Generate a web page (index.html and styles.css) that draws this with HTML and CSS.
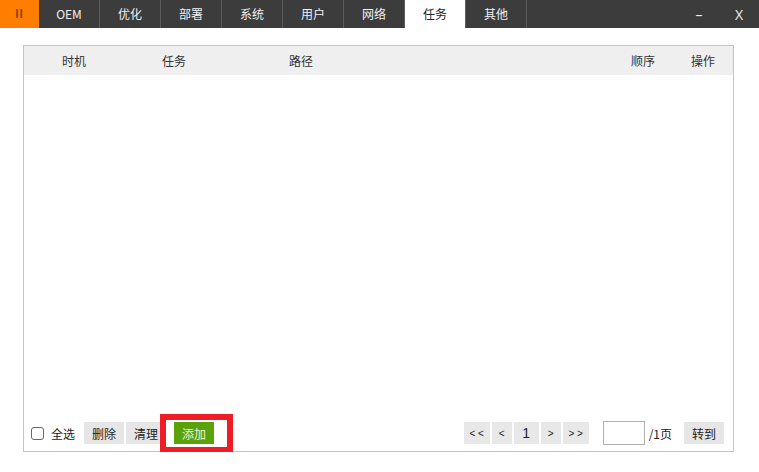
FILE: index.html
```html
<!DOCTYPE html>
<html lang="zh-CN">
<head>
    <meta charset="UTF-8">
    <title>任务</title>
    <link rel="stylesheet" href="styles.css">
</head>
<body>
    <div class="topbar">
        <div class="logo">II</div>
        <div class="tab">OEM</div>
        <div class="tab">优化</div>
        <div class="tab">部署</div>
        <div class="tab">系统</div>
        <div class="tab">用户</div>
        <div class="tab">网络</div>
        <div class="tab active">任务</div>
        <div class="tab">其他</div>
        <div class="spacer"></div>
        <div class="win-btn">&ndash;</div>
        <div class="win-btn">X</div>
    </div>
    <div class="main">
        <div class="table-box">
            <div class="table-head">
                <div class="col c1">时机</div>
                <div class="col c2">任务</div>
                <div class="col c3">路径</div>
                <div class="col fill"></div>
                <div class="col c5">顺序</div>
                <div class="col c6">操作</div>
            </div>
            <div class="table-body"></div>
            <div class="table-foot">
                <label class="check"><span class="box"></span>全选</label>
                <button class="btn">删除</button>
                <button class="btn">清理</button>
                <div class="add-wrap">
                    <button class="btn green">添加</button>
                    <div class="mark"></div>
                </div>
                <div class="spacer"></div>
                <div class="pager">
                    <button class="pg wide">&lt; &lt;</button>
                    <button class="pg">&lt;</button>
                    <button class="pg num">1</button>
                    <button class="pg">&gt;</button>
                    <button class="pg wide">&gt; &gt;</button>
                </div>
                <input class="page-input" type="text">
                <span class="total">/1页</span>
                <button class="btn go">转到</button>
            </div>
        </div>
    </div>
</body>
</html>
```

FILE: styles.css
```css
body {
    margin: 0;
    background: #ffffff;
    font-family: "Noto Sans CJK SC", "Noto Sans", sans-serif;
    font-size: 12px;
    color: #222;
}

.topbar {
    display: flex;
    height: 28px;
    background-color: #3c3c3c;
    color: #f0f0f0;
}

.logo {
    width: 39px;
    background-color: #ff7d00;
    color: #8a4608;
    display: flex;
    align-items: center;
    justify-content: center;
    font-family: "Liberation Sans", sans-serif;
    font-size: 12px;
    font-weight: bold;
    letter-spacing: 1px;
}

.tab {
    width: 60px;
    border-right: 1px solid #5c5c5c;
    display: flex;
    align-items: center;
    justify-content: center;
    line-height: 28px;
}

.tab:first-of-type {
    font-family: "Open Sans", "Noto Sans", sans-serif;
    font-size: 13px;
}

.tab.active {
    background-color: #ffffff;
    color: #222;
}

.spacer {
    flex: 1;
}

.win-btn {
    width: 40px;
    display: flex;
    align-items: center;
    justify-content: center;
    font-family: "Open Sans", sans-serif;
    font-size: 14px;
}

.main {
    padding: 17px 25px 0 23px;
}

.table-box {
    height: 405px;
    border: 1px solid #c4c4c4;
    display: flex;
    flex-direction: column;
}

.table-head {
    display: flex;
    height: 29px;
    background-color: #efefef;
    align-items: center;
    color: #333;
}

.col {
    text-align: center;
}

.c1 { width: 100px; }
.c2 { width: 100px; }
.c3 { width: 154px; }
.fill { flex: 1; }
.c5 { width: 60px; }
.c6 { width: 60px; }

.table-body {
    flex: 1;
}

.table-foot {
    display: flex;
    align-items: center;
    height: 22px;
    padding: 0 9px 7px 7px;
}

.check {
    display: flex;
    align-items: center;
    margin-right: 9px;
}

.check .box {
    width: 11px;
    height: 11px;
    border: 1px solid #666;
    border-radius: 3px;
    margin-right: 7px;
}

.btn {
    height: 22px;
    width: 40px;
    padding: 0;
    border: none;
    background-color: #e6e6e6;
    font-family: inherit;
    font-size: 12px;
    color: #222;
    margin-right: 2px;
}

.add-wrap {
    position: relative;
    margin-left: 6px;
    margin-right: 1px;
}

.btn.green {
    background-color: #5aa10a;
    color: #e8f4dc;
    margin-right: 0;
    display: block;
}

.mark {
    position: absolute;
    left: -14px;
    top: -8px;
    width: 61px;
    height: 27px;
    border: 6px solid #ee1c25;
}

.pager {
    display: flex;
    gap: 2px;
    margin-right: 14px;
}

.pg {
    height: 22px;
    width: 20px;
    padding: 0;
    border: none;
    background-color: #e8e8e8;
    font-family: "Liberation Sans", sans-serif;
    font-size: 10px;
    color: #222;
}

.pg.wide {
    width: 26px;
}

.pg.num {
    width: 25px;
    font-size: 14px;
}

.page-input {
    width: 40px;
    height: 22px;
    padding: 0;
    border: 1px solid #b0b0b0;
    margin-right: 4px;
}

.total {
    margin-right: 12px;
}

.btn.go {
    margin-right: 0;
}
```
